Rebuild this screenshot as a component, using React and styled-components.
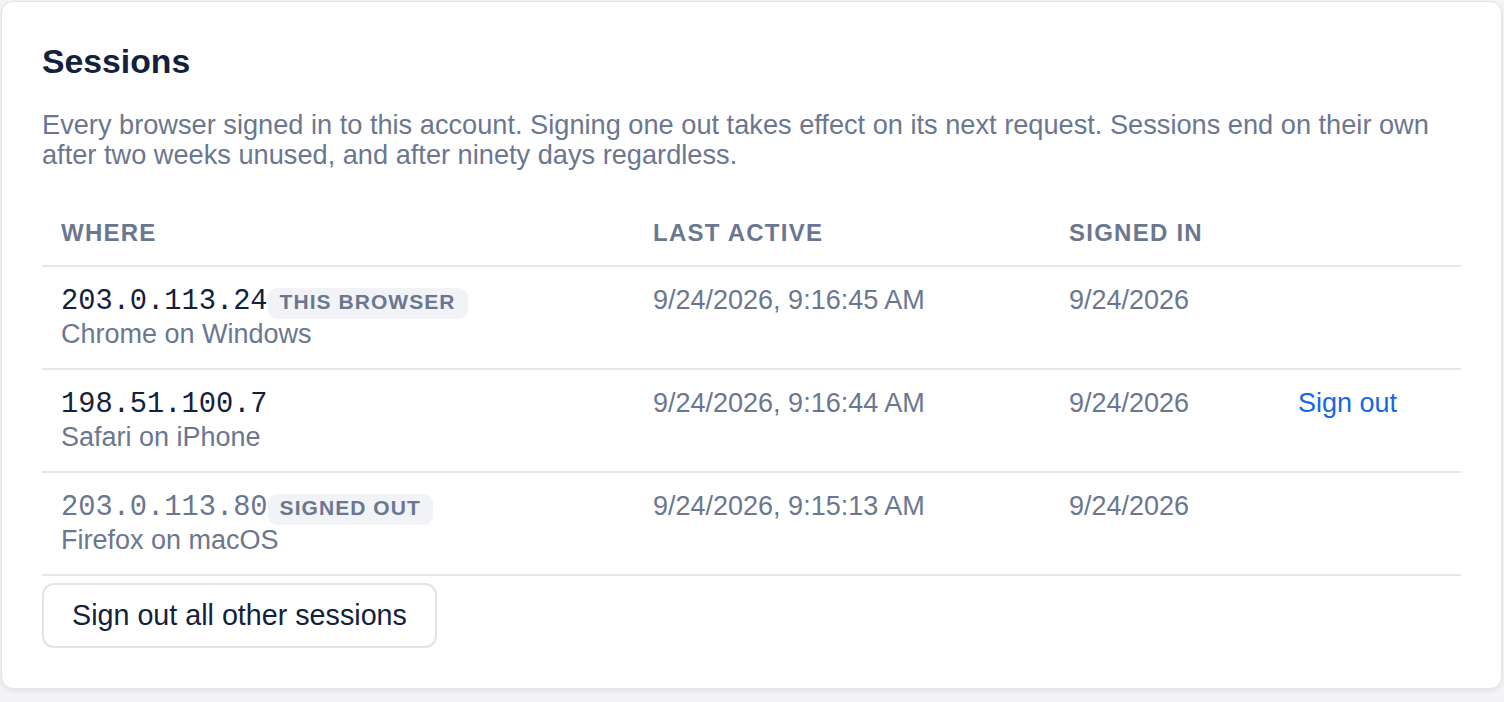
import React from 'react';
import styled, { createGlobalStyle } from 'styled-components';

const GlobalStyle = createGlobalStyle`
  html, body { margin: 0; padding: 0; background: #f4f4f6; }
  body { font-family: "Liberation Sans", Arial, sans-serif; }
  * { box-sizing: border-box; }
`;

const Page = styled.div`
  padding: 1px 2px 14px 1px;
`;

const Card = styled.section`
  background: #ffffff;
  border: 1px solid #e3e3e8;
  border-radius: 12px;
  box-shadow: 0 2px 5px rgba(20, 30, 60, 0.08);
  padding: 40px;
`;

const Title = styled.h2`
  margin: 0;
  font-size: 33.75px;
  font-weight: 700;
  line-height: normal;
  color: #14213d;
`;

const Description = styled.p`
  margin: 29px 0 0;
  font-size: 27.2px;
  line-height: 29.7px;
  color: #6b7790;
`;

const Table = styled.div`
  margin-top: 32px;
`;

const Row = styled.div`
  display: grid;
  grid-template-columns: 592px 416px 229px 1fr;
  border-bottom: 2px solid #e6e6eb;
`;

const HeadCell = styled.div`
  padding: 18px 19px;
  font-size: 24px;
  font-weight: 700;
  letter-spacing: 1.25px;
  text-transform: uppercase;
  line-height: normal;
  color: #6b7790;
`;

const Cell = styled.div`
  padding: 18px 19px;
  font-size: 27px;
  line-height: normal;
  color: #6b7790;
`;

const Address = styled.div`
  font-family: "Liberation Mono", "Courier New", monospace;
  font-size: 28.7px;
  line-height: 34px;
  color: ${p => (p.$muted ? '#6b7790' : '#14213d')};
`;

const Badge = styled.span`
  display: inline-block;
  font-family: "Liberation Sans", Arial, sans-serif;
  font-size: 21px;
  font-weight: 700;
  line-height: 21px;
  letter-spacing: 1.05px;
  text-transform: uppercase;
  padding: 3px 12px 7px;
  border-radius: 9px;
  background: #f1f3f6;
  color: #6b7790;
  vertical-align: baseline;
`;

const Client = styled.div`
  font-size: 27px;
  line-height: normal;
  color: #6b7790;
`;

const LinkButton = styled.button`
  border: none;
  background: none;
  padding: 0;
  font-family: inherit;
  font-size: 27px;
  line-height: normal;
  color: #1766e6;
  cursor: pointer;
`;

const OutlineButton = styled.button`
  margin-top: 7px;
  background: #ffffff;
  border: 2px solid #e2e2e8;
  border-radius: 12px;
  padding: 14px 28px;
  font-family: "Liberation Sans", Arial, sans-serif;
  font-size: 28.7px;
  line-height: normal;
  color: #14213d;
  cursor: pointer;
`;

const sessions = [
  {
    ip: '203.0.113.24',
    client: 'Chrome on Windows',
    badge: 'This browser',
    lastActive: '9/24/2026, 9:16:45 AM',
    signedIn: '9/24/2026',
    canSignOut: false,
    muted: false,
  },
  {
    ip: '198.51.100.7',
    client: 'Safari on iPhone',
    lastActive: '9/24/2026, 9:16:44 AM',
    signedIn: '9/24/2026',
    canSignOut: true,
    muted: false,
  },
  {
    ip: '203.0.113.80',
    client: 'Firefox on macOS',
    badge: 'Signed out',
    lastActive: '9/24/2026, 9:15:13 AM',
    signedIn: '9/24/2026',
    canSignOut: false,
    muted: true,
  },
];

export default function App() {
  return (
    <Page>
      <GlobalStyle />
      <Card>
        <Title>Sessions</Title>
        <Description>
          Every browser signed in to this account. Signing one out takes effect on its next
          request. Sessions end on their own after two weeks unused, and after ninety days
          regardless.
        </Description>
        <Table>
          <Row>
            <HeadCell>Where</HeadCell>
            <HeadCell>Last active</HeadCell>
            <HeadCell>Signed in</HeadCell>
            <HeadCell />
          </Row>
          {sessions.map(s => (
            <Row key={s.ip}>
              <Cell>
                <Address $muted={s.muted}>
                  {s.ip}{s.badge && <Badge>{s.badge}</Badge>}
                </Address>
                <Client>{s.client}</Client>
              </Cell>
              <Cell>{s.lastActive}</Cell>
              <Cell>{s.signedIn}</Cell>
              <Cell>{s.canSignOut && <LinkButton>Sign out</LinkButton>}</Cell>
            </Row>
          ))}
        </Table>
        <OutlineButton>Sign out all other sessions</OutlineButton>
      </Card>
    </Page>
  );
}
